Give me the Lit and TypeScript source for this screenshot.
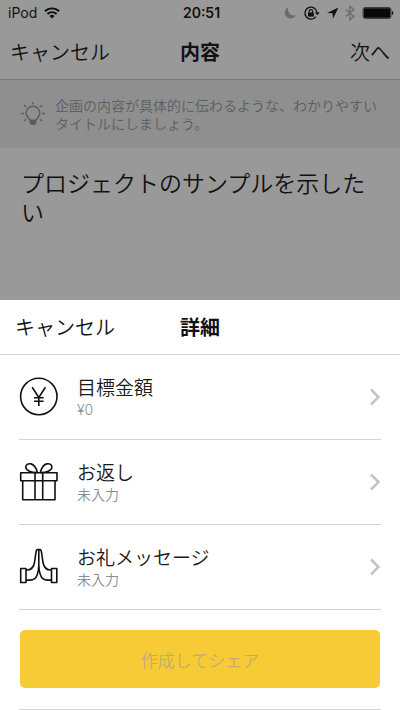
import { LitElement, html, css, svg, TemplateResult } from "lit";
import { customElement, property } from "lit/decorators.js";

const bulbIcon = svg`
  <svg width="26" height="26" viewBox="0 0 26 26" fill="none" stroke="currentColor" stroke-width="1.5" aria-hidden="true">
    <path d="M10 19.500c0-1.800-3.900-3.500-3.900-7.400a6.900 6.900 0 0 1 13.800 0c0 3.900-3.900 5.600-3.900 7.400"/>
    <path d="M10 19h6v2.800l-1.200 1.700h-3.600L10 21.800z" fill="currentColor" stroke-width="1"/>
    <path d="M13 1v2.200M1 12.500h3M22 12.500h3M3.800 4.200 6 6M22.200 4.200 20 6M3.800 20 6 18.300M22.200 20 20 18.300"/>
  </svg>`;

const yenIcon = svg`
  <svg width="40" height="40" viewBox="0 0 40 40" fill="none" stroke="#111" stroke-width="1.6" aria-hidden="true">
    <circle cx="19.800" cy="19.500" r="18.200"/>
    <path d="M13.200 10.300 19.800 20.500 26.400 10.300M19.800 20.500v8.500M15 20.700h9.600M15 24.200h9.600"/>
  </svg>`;

const giftIcon = svg`
  <svg width="40" height="40" viewBox="0 0 40 40" fill="none" stroke="#111" stroke-width="1.600" stroke-linejoin="round" aria-hidden="true">
    <path d="M1.700 10.700h36.300v8H1.700zM3.700 18.700h32.300v19H3.700zM16 10.700v27M23.700 10.700v27"/>
    <path d="M18.300 10.500C12.500 10.700 7 8.500 6.800 5.200 6.700 2.700 9 1.200 12 1.900c3.200.8 5.300 4.300 6.300 8.600z"/>
    <path d="M21.400 10.500c5.800.2 11.300-2 11.500-5.300.1-2.500-2.200-4-5.200-3.300-3.200.8-5.300 4.300-6.300 8.600z"/>
  </svg>`;

const handsIcon = svg`
  <svg width="40" height="40" viewBox="0 0 40 40" fill="none" stroke="#111" stroke-width="1.600" stroke-linejoin="round" aria-hidden="true">
    <path d="M1.700 21.500h5.300v14H1.700zM32.500 21.500h5.300v14h-5.300z"/>
    <path d="M7 23c5.300.3 7.600-2.300 8.500-7.500l1.400-9.700c.3-2.200.7-3.200 1.500-3.200h2.700c.8 0 1.200 1 1.500 3.200L24 15.500c.9 5.200 3.200 7.800 8.500 7.500"/>
    <path d="M19.800 3v18M19.800 18c0 6.500-1.100 8-1.900 10.500-1 3.100-3 4.600-6.900 4.600H7M19.800 18c0 6.500 1.100 8 1.900 10.500 1 3.100 3 4.600 6.900 4.600h3.900"/>
  </svg>`;

const chevronIcon = svg`
  <svg width="12" height="18" viewBox="0 0 12 18" fill="none" stroke="#c4c4c6" stroke-width="2.500" aria-hidden="true">
    <path d="M2 1.500l7.500 7.500L2 16.500"/>
  </svg>`;

const wifiIcon = svg`
  <svg width="16" height="12" viewBox="0 0 16 12" fill="none" stroke="#111" stroke-width="1.900" aria-hidden="true">
    <path d="M.9 4.300a10.200 10.200 0 0 1 14.200 0M3.400 7a6.500 6.500 0 0 1 9.200 0"/>
    <path d="M8 11.600 5.500 9.100a3.500 3.500 0 0 1 5 0z" fill="#111" stroke="none"/>
  </svg>`;

const statusIcons = svg`
  <svg width="112" height="16" viewBox="0 0 112 16" fill="none" aria-hidden="true">
    <path d="M5 2.400C1.300 4.400.8 9 3.500 11.700c2.900 2.900 7.600 2.200 9.500-1.500C8.200 11.400 4 7.600 5 2.400z" fill="#6c6c6c"/>
    <path d="M33.900 7.300A6 6 0 1 0 32.900 11.600" stroke="#111" stroke-width="1.300"/>
    <path d="M31.900 7.200h4.800l-2.400 3z" fill="#111"/>
    <path d="M25 7.400h5.800v4.200H25z" fill="#111"/>
    <path d="M26.200 7.600V6.300a1.700 1.700 0 0 1 3.400 0v1.300" stroke="#111" stroke-width="1.200"/>
    <path d="M55.500 2.600 44 8l5.600.3.300 5.500z" fill="#111"/>
    <path d="M62.800 4.600l8.200 6.800-4.100 3.400V1.200L71 4.600l-8.200 6.800" stroke="#707070" stroke-width="1.400"/>
    <rect x="80.100" y="2.600" width="27.800" height="10.800" rx="2" stroke="#333"/>
    <rect x="80.800" y="3.300" width="26.400" height="9.400" rx="1" fill="#080808"/>
    <path d="M108.800 6c2 .5 2 3.500 0 4z" fill="#111"/>
  </svg>`;

@customElement("detail-row")
export class DetailRow extends LitElement {
  @property({ attribute: false }) icon?: TemplateResult<2>;
  @property() label = "";
  @property() value = "";

  static styles = css`
    :host {
      display: block;
      border-bottom: 1px solid #d4d4d6;
    }
    .row {
      display: flex;
      align-items: center;
      width: 100%;
      height: 84px;
      padding: 0;
      border: 0;
      background: none;
      font: inherit;
      text-align: left;
      cursor: pointer;
    }
    .icon,
    .chevron {
      display: flex;
      flex: none;
    }
    .texts {
      display: flex;
      flex-direction: column;
      flex: 1;
      min-width: 0;
      padding-left: 18px;
    }
    .label {
      font-size: 19px;
      line-height: 26px;
      color: #1a1a1a;
    }
    .value {
      font-family: Inter, "Noto Sans CJK JP", sans-serif;
      font-size: 14px;
      line-height: 20px;
      color: #8a8d96;
    }
  `;

  render() {
    return html`
      <button class="row" type="button">
        <span class="icon">${this.icon}</span>
        <span class="texts">
          <span class="label">${this.label}</span>
          <span class="value">${this.value}</span>
        </span>
        <span class="chevron">${chevronIcon}</span>
      </button>
    `;
  }
}

@customElement("app-root")
export class AppRoot extends LitElement {
  static styles = css`
    :host {
      display: flex;
      flex-direction: column;
      min-height: 100vh;
      background: #999;
      color: #111;
      font-family: "Noto Sans CJK JP", sans-serif;
      font-weight: 350;
    }
    button {
      font: inherit;
      color: inherit;
      background: none;
      border: 0;
      padding: 0;
      cursor: pointer;
    }
    .status,
    .bar {
      display: grid;
      grid-template-columns: 1fr auto 1fr;
      align-items: center;
    }
    .status {
      height: 25px;
      padding: 0 5px 0 8px;
      font-family: Inter, sans-serif;
      font-size: 14px;
      font-weight: 400;
    }
    .carrier {
      display: flex;
      align-items: center;
      gap: 7px;
    }
    .time {
      font-weight: 600;
    }
    .end {
      display: flex;
      justify-self: end;
    }
    .bar {
      box-sizing: border-box;
      height: 55px;
      font-size: 20px;
      line-height: 28px;
    }
    .start {
      justify-self: start;
    }
    .bar-title {
      margin: 0;
      font-size: 20px;
      font-weight: 700;
    }
    .page-bar {
      padding: 0 10px;
      border-bottom: 1px solid #777;
    }
    .hint {
      display: flex;
      align-items: center;
      gap: 9px;
      height: 68px;
      padding: 0 20px;
      background: #8f8f8f;
      color: #5c5e66;
    }
    .hint svg {
      flex: none;
    }
    .hint-text {
      margin: 0;
      font-size: 14px;
      line-height: 18px;
    }
    .editor {
      display: flex;
      flex: 1;
    }
    .title-input {
      flex: 1;
      min-width: 0;
      min-height: 60px;
      padding: 20px 21px;
      border: 0;
      outline: 0;
      resize: none;
      overflow: hidden;
      background: none;
      color: #111;
      font: inherit;
      font-size: 23px;
      line-height: 29px;
    }
    .sheet {
      background: #fff;
    }
    .sheet-bar {
      padding: 0 15px;
      border-bottom: 1px solid #d4d4d6;
    }
    .rows {
      padding: 0 19px;
    }
    .action {
      margin: 0 19px;
      padding: 20px 1px 21px;
      border-bottom: 1px solid #d4d4d6;
    }
    .share {
      width: 100%;
      height: 58px;
      border-radius: 5px;
      background: #f7cb35;
      color: #c0ab75;
      font-size: 17px;
    }
  `;

  render() {
    return html`
      <div class="status">
        <span class="carrier">iPod ${wifiIcon}</span>
        <span class="time">20:51</span>
        <span class="end">${statusIcons}</span>
      </div>
      <header class="bar page-bar">
        <button class="start" type="button">キャンセル</button>
        <h1 class="bar-title">内容</h1>
        <button class="end" type="button">次へ</button>
      </header>
      <div class="hint">
        ${bulbIcon}
        <p class="hint-text" id="hint">企画の内容が具体的に伝わるような、わかりやすいタイトルにしましょう。</p>
      </div>
      <main class="editor">
        <textarea
          class="title-input"
          aria-label="タイトル"
          aria-describedby="hint"
          spellcheck="false"
          .value=${"プロジェクトのサンプルを示したい"}
        ></textarea>
      </main>
      <section class="sheet" role="dialog" aria-labelledby="sheet-title">
        <header class="bar sheet-bar">
          <button class="start" type="button">キャンセル</button>
          <h2 class="bar-title" id="sheet-title">詳細</h2>
        </header>
        <div class="rows">
          <detail-row .icon=${yenIcon} label="目標金額" value="¥0"></detail-row>
          <detail-row .icon=${giftIcon} label="お返し" value="未入力"></detail-row>
          <detail-row .icon=${handsIcon} label="お礼メッセージ" value="未入力"></detail-row>
        </div>
        <div class="action">
          <button class="share" type="button">作成してシェア</button>
        </div>
      </section>
    `;
  }
}
